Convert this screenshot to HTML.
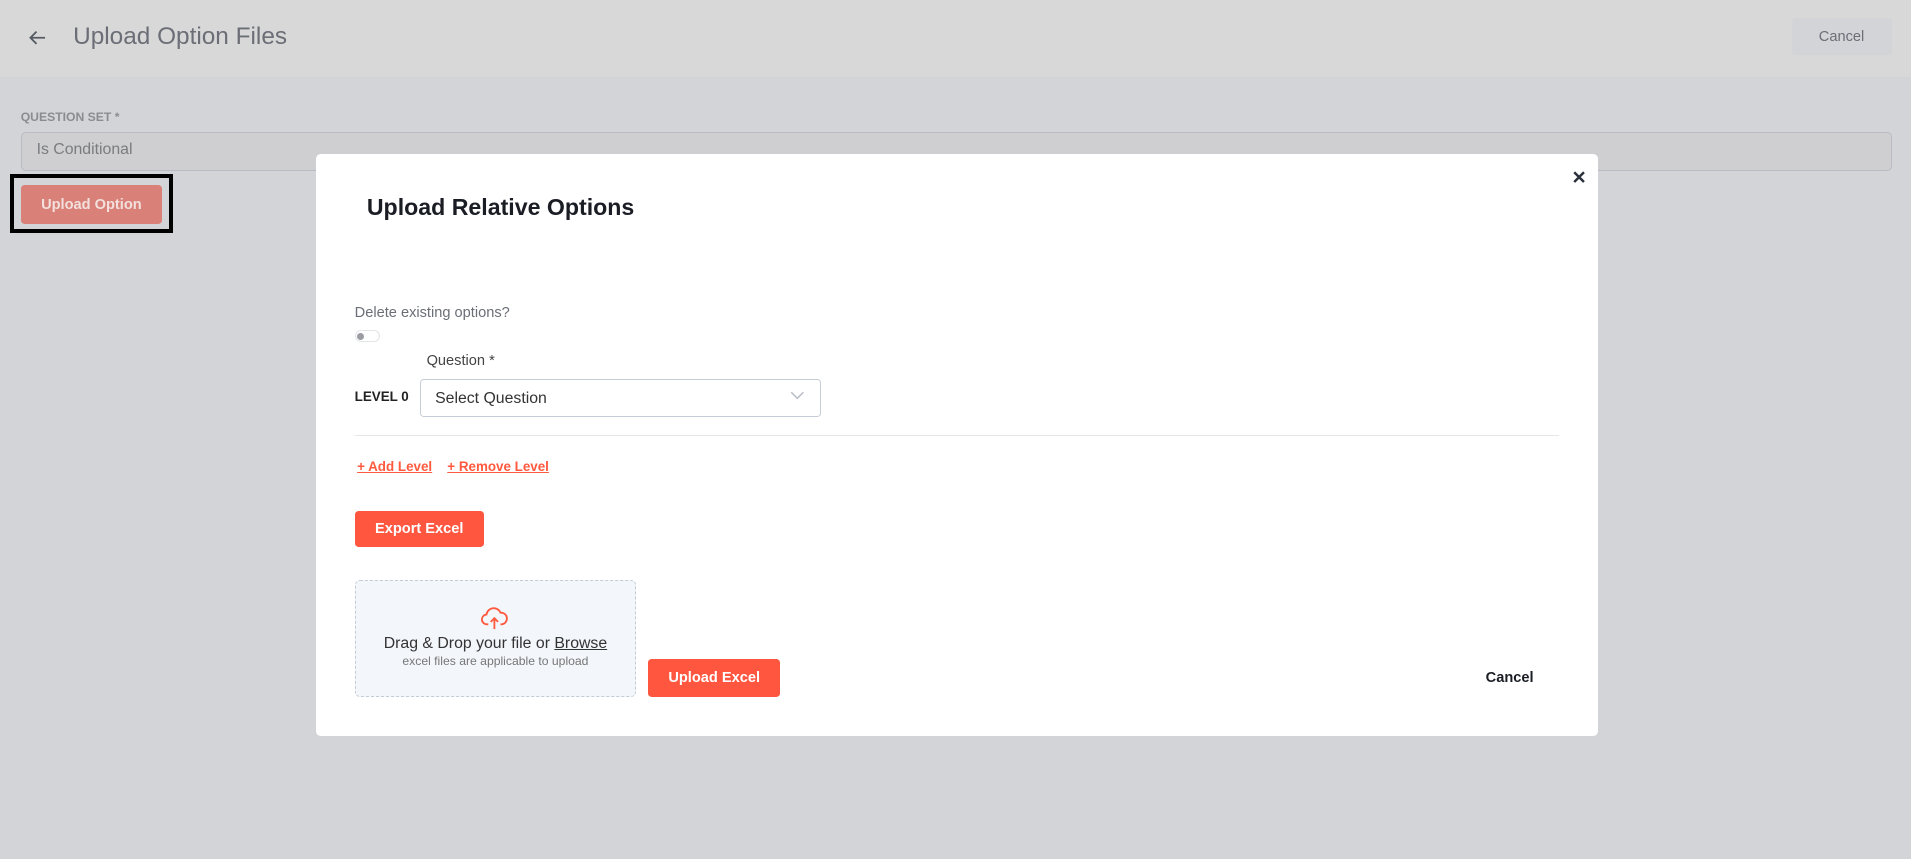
<!DOCTYPE html>
<html><head><meta charset="utf-8"><style>
html{zoom:1.21875}
*{box-sizing:border-box;margin:0;padding:0}
body{width:1568px;height:705px;background:#d3d4d8;font-family:"Liberation Sans",sans-serif;position:relative;overflow:hidden}
.a{position:absolute;white-space:nowrap}
.hdr{position:absolute;left:0;top:0;width:1568px;height:63px;background:#d8d8d8}
.btn{position:absolute;display:flex;align-items:center;justify-content:center;font-weight:bold;font-size:12px;color:#fff;background:#ff5640;border-radius:3px}
</style></head><body>
<div class="hdr"></div>
<svg class="a" style="left:23px;top:23px" width="16" height="16" viewBox="0 0 16 16"><path d="M14 8H2M7 3L2 8l5 5" stroke="#555a63" stroke-width="1.5" fill="none"/></svg>
<div class="a" style="left:60px;top:19px;font-size:20px;color:#6b6e76;font-weight:500">Upload Option Files</div>
<div class="btn" style="left:1470px;top:15px;width:82px;height:30px;background:#d3d4d8;color:#6b6e76;font-weight:normal">Cancel</div>
<div class="a" style="left:17px;top:90px;font-size:10px;font-weight:bold;color:#8a8c90">QUESTION SET *</div>
<div class="a" style="left:17px;top:108px;width:1535px;height:32px;background:#cfcfd1;border:1px solid #b9bcc4;border-radius:4px"></div>
<div class="a" style="left:30px;top:116px;font-size:13px;color:#7a7c80">Is Conditional</div>
<div class="a" style="left:8px;top:143px;width:134px;height:48px;border:4px solid #000"></div>
<div class="btn" style="left:17px;top:152px;width:116px;height:32px;background:#d98178;color:#f3e0dd">Upload Option</div>

<div class="a" style="left:259px;top:126px;width:1052px;height:478px;background:#fff;border-radius:4px"></div>
<div class="a" style="left:301px;top:159px;font-size:19px;color:#1a1d24;font-weight:bold">Upload Relative Options</div>
<svg class="a" style="left:1291px;top:140px" width="10" height="10" viewBox="0 0 10 10"><path d="M1 1l8 8M9 1L1 9" stroke="#2a303c" stroke-width="2"/></svg>
<div class="a" style="left:291px;top:250px;font-size:12px;color:#6b6e76">Delete existing options?</div>
<div class="a" style="left:291px;top:271px;width:21px;height:10px;border:1px solid #e2e4e8;border-radius:6px"></div>
<div class="a" style="left:293px;top:273px;width:6px;height:6px;background:#9a9ca2;border-radius:50%"></div>
<div class="a" style="left:350px;top:290px;font-size:12px;color:#444;font-weight:500">Question *</div>
<div class="a" style="left:291px;top:319px;font-size:11px;color:#222;font-weight:bold">LEVEL 0</div>
<div class="a" style="left:345px;top:311px;width:329px;height:31px;border:1px solid #c8ccd6;border-radius:3px"></div>
<div class="a" style="left:357px;top:320px;font-size:13px;color:#333">Select Question</div>
<svg class="a" style="left:648px;top:321px" width="12" height="8" viewBox="0 0 12 8"><path d="M1 1l5 5 5-5" stroke="#b8bcc4" stroke-width="1.2" fill="none"/></svg>
<div class="a" style="left:291px;top:357px;width:988px;height:1px;background:#e5e7eb"></div>
<div class="a" style="left:293px;top:377px;font-size:11px;color:#ff5a3f;text-decoration:underline;font-weight:bold">+ Add Level</div>
<div class="a" style="left:367px;top:377px;font-size:11px;color:#ff5a3f;text-decoration:underline;font-weight:bold">+ Remove Level</div>
<div class="btn" style="left:291px;top:419px;width:106px;height:30px">Export Excel</div>
<div class="a" style="left:291px;top:476px;width:231px;height:96px;background:#f3f6fb;border:1px dashed #c5cbd6;border-radius:4px"></div>
<svg class="a" style="left:395px;top:497px" width="22" height="20" viewBox="0 0 22 20"><path d="M6 15H5a4 4 0 0 1-.5-8A6 6 0 0 1 16 5.5 4.5 4.5 0 0 1 17 15h-1" stroke="#ff5a3f" stroke-width="1.5" fill="none"/><path d="M11 19V10M8 13l3-3 3 3" stroke="#ff5a3f" stroke-width="1.5" fill="none"/></svg>
<div class="a" style="left:291px;top:521px;width:231px;text-align:center;font-size:13px;color:#333">Drag &amp; Drop your file or <u>Browse</u></div>
<div class="a" style="left:291px;top:537px;width:231px;text-align:center;font-size:10px;color:#777">excel files are applicable to upload</div>
<div class="btn" style="left:532px;top:541px;width:108px;height:31px">Upload Excel</div>
<div class="a" style="left:1219px;top:550px;font-size:12px;font-weight:bold;color:#1a1d24">Cancel</div>
</body></html>
